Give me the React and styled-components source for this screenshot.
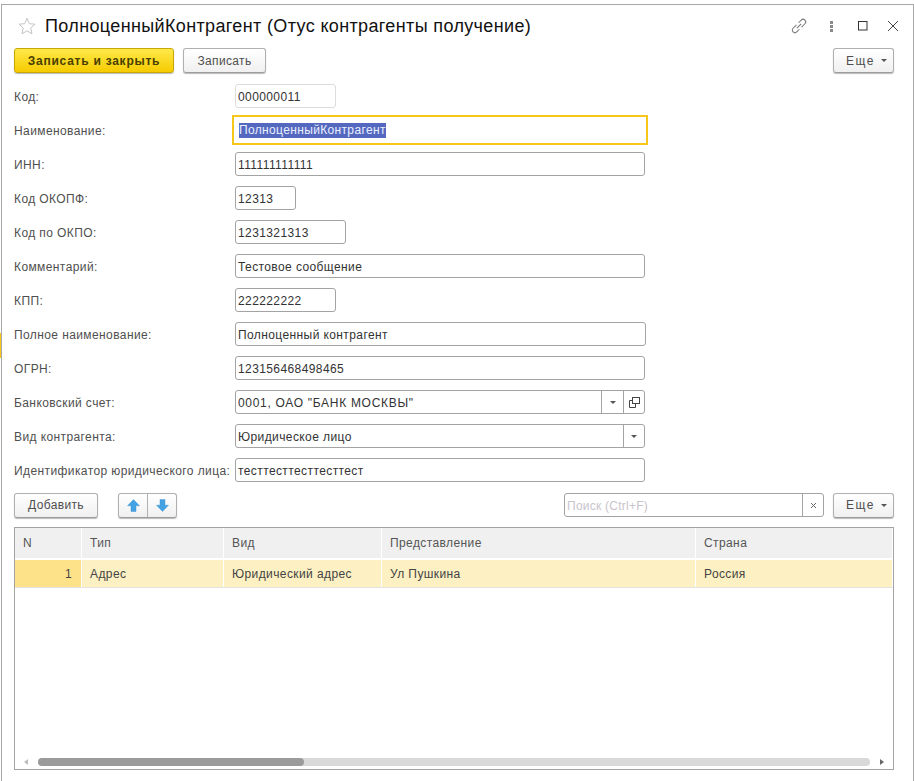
import React from 'react';
import styled, { createGlobalStyle } from 'styled-components';

const Global = createGlobalStyle`
  html, body { margin: 0; padding: 0; background: #fff; }
  body { font-family: "Liberation Sans", Arial, sans-serif; font-size: 12px; color: #4b4b4b; }
`;
const Page = styled.div`
  position: relative; width: 914px; height: 781px; overflow: hidden; background: #fff; padding-top: 4px; padding-left: 1px; box-sizing: border-box;
`;
const BackTick = styled.div`position: absolute; left: 0; top: 333px; width: 1px; height: 25px; background: #f6c618;`;
const Win = styled.div`
  width: 913px; height: 777px; box-sizing: border-box; border: 1px solid #a8a8a8; border-bottom: none;
  padding: 0 19px 0 12px; background: #fff; display: flex; flex-direction: column;
`;
const TitleBar = styled.div`height: 38px; display: flex; align-items: center; flex: none; margin-top: 2px;`;
const StarWrap = styled.div`width: 18px; height: 18px; margin: 0 9px 0 4px; flex: none;`;
const Title = styled.div`font-size: 18px; color: #111; flex: 1; white-space: nowrap; letter-spacing: 0.36px;`;
const TitleIcons = styled.div`display: flex; align-items: center; margin-right: -14px;`;
const IconBtn = styled.div`width: ${p => p.$w}px; height: 20px; display: flex; align-items: center; justify-content: center;`;
const CmdBar = styled.div`display: flex; align-items: center; height: 25px; flex: none; margin-top: 3px;`;
const Btn = styled.div`
  height: 25px; box-sizing: border-box; width: ${p => p.$w}px;
  margin-left: ${p => p.$ml || 0}px; display: flex; align-items: center; justify-content: center; white-space: nowrap;
  border: 1px solid #b0b0b0; border-bottom-color: #9c9c9c; border-radius: 3px; letter-spacing: .35px;
  background: linear-gradient(#ffffff, #f0f0f0); color: #4e4e4e; box-shadow: 0 1px 1px #bbb; flex: none;
`;
const PrimaryBtn = styled(Btn)`
  background: linear-gradient(#ffe94a, #f6cb00); border-color: #c9a600; color: #4a4000; font-weight: bold; letter-spacing: .75px;
`;
const MoreBtn = styled(Btn)`letter-spacing: 1.5px; padding-left: 6px;`;
const Spacer = styled.div`flex: 1;`;
const Caret = styled.span`
  display: inline-block; width: 0; height: 0; border-left: 3px solid transparent; border-right: 3px solid transparent; border-top: 3px solid #555; margin-left: ${p => p.$ml || 0}px;
`;
const Form = styled.div`display: flex; flex-direction: column; margin-top: 6px;`;
const Row = styled.div`display: flex; align-items: center; height: 34px; flex: none;`;
const Label = styled.div`width: 221px; flex: none; letter-spacing: .4px; color: #4f4f4f; white-space: nowrap; padding-top: 1px;`;
const Field = styled.div`
  width: ${p => p.$w}px; height: 24px; box-sizing: border-box; border: 1px solid ${p => p.$soft ? '#dcdcdc' : '#a3a3a3'}; border-radius: 3px;
  background: #fff; display: flex; align-items: center; padding-left: 2px; color: #333; letter-spacing: .4px; white-space: nowrap; overflow: hidden;
`;
const FieldText = styled.div`flex: 1; overflow: hidden; padding-top: 1px;`;
const WideText = styled(FieldText)`letter-spacing: .7px;`;
const FocusField = styled(Field)`
  height: 30px; margin-left: -3px; border: 2px solid #f6c618; border-radius: 0; padding-left: 5px;
`;
const Sel = styled.span`background: #5568c0; color: #e8f0ff; height: 15px; line-height: 15px; letter-spacing: .35px;`;
const Seg = styled.div`
  width: ${p => p.$w}px; align-self: stretch; flex: none; border-left: 1px solid #a3a3a3; display: flex; align-items: center; justify-content: center;
`;
const TableBar = styled.div`display: flex; align-items: center; height: 26px; flex: none; margin-top: 5px;`;
const ArrowGroup = styled.div`
  display: flex; height: 25px; width: 59px; box-sizing: border-box; margin-left: 20px; border: 1px solid #b0b0b0; border-bottom-color: #9c9c9c; border-radius: 3px;
  background: linear-gradient(#fff, #f0f0f0); box-shadow: 0 1px 1px #bbb;
`;
const ArrowBtn = styled.div`
  flex: 1; display: flex; align-items: center; justify-content: center;
  & + & { border-left: 1px solid #b0b0b0; }
`;
const Search = styled(Field)`color: #c9c3cc; letter-spacing: .25px;`;
const Table = styled.div`
  flex: none; margin-top: 9px; width: 880px; height: 243px; box-sizing: border-box; border: 1px solid #a3a3a3; display: flex; flex-direction: column; position: relative; background: #fff;
`;
const cols = [67, 142, 158, 314, 197];
const HeadRow = styled.div`display: flex; height: 30px; flex: none; background: #f0f0f0;`;
const HeadCell = styled.div`
  width: ${p => p.$w}px; box-sizing: border-box; padding-left: 8px; display: flex; align-items: center; border-right: 1px solid #fff; flex: none; letter-spacing: .4px; color: #555;
`;
const DataRow = styled.div`display: flex; height: 27px; flex: none; margin-top: 2px; background: #fdf0c3; border-bottom: 1px solid #e3e3e3;`;
const DataCell = styled.div`
  width: ${p => p.$w}px; box-sizing: border-box; padding-left: 8px; display: flex; align-items: center; border-right: 1px solid #fff; flex: none; letter-spacing: .4px; color: #444;
`;
const NumCell = styled(DataCell)`background: #fde28a; justify-content: flex-end; padding-right: 9px;`;
const Scroll = styled.div`position: absolute; left: 0; right: 0; bottom: 3px; height: 8px; display: flex; align-items: center;`;
const ScrollArrow = styled.span`
  width: 0; height: 0; border-top: 3px solid transparent; border-bottom: 3px solid transparent; flex: none;
  ${p => p.$left ? 'border-right: 4px solid #bdbdbd; margin: 0 10px 0 9px;' : 'border-left: 4px solid #666; margin: 0 0 0 10px;'}
`;
const Track = styled.div`width: 832px; height: 8px; background: #d9d9d9; border-radius: 4px; flex: none;`;
const Thumb = styled.div`width: 266px; height: 8px; background: #9b9b9b; border-radius: 4px;`;

const Up = () => <svg width="13" height="13" viewBox="0 0 13 13"><path d="M6.5 .5 L12.5 6.8 H9 V12.5 H4 V6.8 H.5 Z" fill="#42a2e4" stroke="#3a8fc9" strokeWidth=".4"/></svg>;
const Down = () => <svg width="13" height="13" viewBox="0 0 13 13"><path d="M6.5 12.5 L12.5 6.2 H9 V.5 H4 V6.2 H.5 Z" fill="#42a2e4" stroke="#3a8fc9" strokeWidth=".4"/></svg>;

export default function App() {
  return (
    <Page>
      <Global />
      <BackTick />
      <Win>
        <TitleBar>
          <StarWrap>
            <svg width="18" height="18" viewBox="0 0 18 18"><path d="M9 1.2 L11.3 6.7 L17 7.2 L12.7 11 L14 16.8 L9 13.8 L4 16.8 L5.3 11 L1 7.2 L6.7 6.7 Z" fill="none" stroke="#c4c4c4" strokeWidth="1"/></svg>
          </StarWrap>
          <Title>ПолноценныйКонтрагент (Отус контрагенты получение)</Title>
          <TitleIcons>
            <IconBtn $w={30}>
              <svg width="16" height="16" viewBox="0 0 16 16" fill="none" stroke="#777" strokeWidth="1" style={{ overflow: 'visible' }}>
                <g transform="rotate(-45 8 8)">
                  <path d="M7 5.4 H2.2 a2.6 2.6 0 0 0 0 5.2 H6" />
                  <path d="M9 10.6 H13.8 a2.6 2.6 0 0 0 0 -5.2 H10" />
                  <path d="M5 8 H11" />
                </g>
              </svg>
            </IconBtn>
            <IconBtn $w={34}>
              <svg width="3" height="11" viewBox="0 0 3 11" fill="#8a8a8a"><rect width="3" height="3" /><rect y="4" width="3" height="3" /><rect y="8" width="3" height="3" /></svg>
            </IconBtn>
            <IconBtn $w={30}>
              <svg width="10" height="10" viewBox="0 0 10 10" fill="none" stroke="#333" strokeWidth="1"><rect x=".5" y=".5" width="8.5" height="8.5"/></svg>
            </IconBtn>
            <IconBtn $w={30}>
              <svg width="12" height="12" viewBox="0 0 12 12" fill="none" stroke="#444" strokeWidth="1"><path d="M1 1 L11 11 M11 1 L1 11"/></svg>
            </IconBtn>
          </TitleIcons>
        </TitleBar>
        <CmdBar>
          <PrimaryBtn $w={160}>Записать и закрыть</PrimaryBtn>
          <Btn $w={83} $ml={9}>Записать</Btn>
          <Spacer />
          <MoreBtn $w={61}>Еще<Caret $ml={6} /></MoreBtn>
        </CmdBar>
        <Form>
          <Row><Label>Код:</Label><Field $w={101} $soft><FieldText>000000011</FieldText></Field></Row>
          <Row><Label>Наименование:</Label><FocusField $w={416}><Sel>ПолноценныйКонтрагент</Sel></FocusField></Row>
          <Row><Label>ИНН:</Label><Field $w={410}><FieldText>111111111111</FieldText></Field></Row>
          <Row><Label>Код ОКОПФ:</Label><Field $w={61}><FieldText>12313</FieldText></Field></Row>
          <Row><Label>Код по ОКПО:</Label><Field $w={111}><FieldText>1231321313</FieldText></Field></Row>
          <Row><Label>Комментарий:</Label><Field $w={410}><FieldText>Тестовое сообщение</FieldText></Field></Row>
          <Row><Label>КПП:</Label><Field $w={101}><FieldText>222222222</FieldText></Field></Row>
          <Row><Label>Полное наименование:</Label><Field $w={411}><FieldText>Полноценный контрагент</FieldText></Field></Row>
          <Row><Label>ОГРН:</Label><Field $w={410}><FieldText>123156468498465</FieldText></Field></Row>
          <Row>
            <Label>Банковский счет:</Label>
            <Field $w={410}>
              <WideText>0001, ОАО "БАНК МОСКВЫ"</WideText>
              <Seg $w={21}><Caret /></Seg>
              <Seg $w={20}>
                <svg width="11" height="11" viewBox="0 0 11 11" fill="none" stroke="#444" strokeWidth="1"><rect x="3.5" y=".5" width="7" height="6"/><path d="M3.5 3.5 H.5 V10.5 H6.5 V6.5"/></svg>
              </Seg>
            </Field>
          </Row>
          <Row>
            <Label>Вид контрагента:</Label>
            <Field $w={410}>
              <FieldText>Юридическое лицо</FieldText>
              <Seg $w={20}><Caret /></Seg>
            </Field>
          </Row>
          <Row><Label>Идентификатор юридического лица:</Label><Field $w={410}><FieldText>тесттесттесттесттест</FieldText></Field></Row>
        </Form>
        <TableBar>
          <Btn $w={84}>Добавить</Btn>
          <ArrowGroup>
            <ArrowBtn><Up /></ArrowBtn>
            <ArrowBtn><Down /></ArrowBtn>
          </ArrowGroup>
          <Spacer />
          <Search $w={260}>
            <FieldText>Поиск (Ctrl+F)</FieldText>
            <Seg $w={20}>
              <svg width="7" height="7" viewBox="0 0 7 7" fill="none" stroke="#666" strokeWidth="1"><path d="M1 1 L6 6 M6 1 L1 6"/></svg>
            </Seg>
          </Search>
          <MoreBtn $w={61} $ml={9}>Еще<Caret $ml={6} /></MoreBtn>
        </TableBar>
        <Table>
          <HeadRow>
            <HeadCell $w={cols[0]}>N</HeadCell>
            <HeadCell $w={cols[1]}>Тип</HeadCell>
            <HeadCell $w={cols[2]}>Вид</HeadCell>
            <HeadCell $w={cols[3]}>Представление</HeadCell>
            <HeadCell $w={cols[4]}>Страна</HeadCell>
          </HeadRow>
          <DataRow>
            <NumCell $w={cols[0]}>1</NumCell>
            <DataCell $w={cols[1]}>Адрес</DataCell>
            <DataCell $w={cols[2]}>Юридический адрес</DataCell>
            <DataCell $w={cols[3]}>Ул Пушкина</DataCell>
            <DataCell $w={cols[4]}>Россия</DataCell>
          </DataRow>
          <Scroll>
            <ScrollArrow $left />
            <Track><Thumb /></Track>
            <ScrollArrow />
          </Scroll>
        </Table>
      </Win>
    </Page>
  );
}
